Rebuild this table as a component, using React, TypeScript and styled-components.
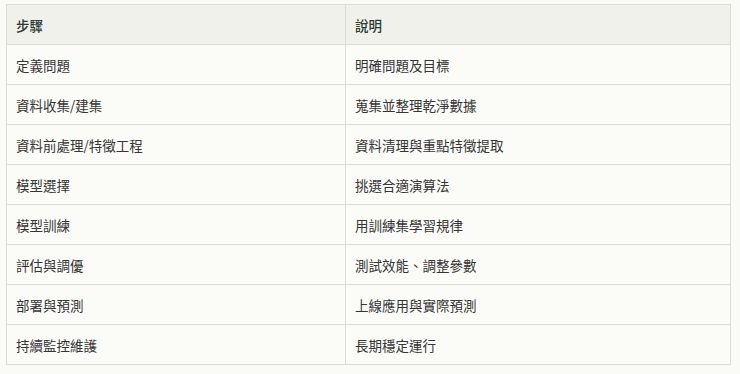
import React from "react";
import styled, { createGlobalStyle } from "styled-components";

const GlobalStyle = createGlobalStyle`
  html, body {
    margin: 0;
    padding: 0;
    background: #fafaf7;
  }
  body {
    font-family: "Noto Sans CJK TC", "Noto Sans", sans-serif;
  }
`;

const Page = styled.div`
  padding: 4px 9px 0 6px;
`;

const Table = styled.table`
  width: 725px;
  border-collapse: collapse;
  border: 1px solid #dcdcd8;
  background: #fbfbf8;
  font-size: 13.5px;
`;

const HeadCell = styled.th<{ $w?: number }>`
  width: ${(p) => (p.$w ? `${p.$w}px` : "auto")};
  height: 40px;
  padding: 0 9px;
  text-align: left;
  font-weight: 500;
  color: #2b3a33;
  background: #f1f1ec;
  border: 1px solid #dcdcd8;
  box-sizing: border-box;
`;

const Cell = styled.td`
  height: 40px;
  padding: 0 9px;
  color: #353535;
  border: 1px solid #dcdcd8;
  box-sizing: border-box;
`;

const rows: [string, string][] = [
  ["定義問題", "明確問題及目標"],
  ["資料收集/建集", "蒐集並整理乾淨數據"],
  ["資料前處理/特徵工程", "資料清理與重點特徵提取"],
  ["模型選擇", "挑選合適演算法"],
  ["模型訓練", "用訓練集學習規律"],
  ["評估與調優", "測試效能、調整參數"],
  ["部署與預測", "上線應用與實際預測"],
  ["持續監控維護", "長期穩定運行"],
];

const App: React.FC = () => {
  return (
    <>
      <GlobalStyle />
      <Page>
        <Table>
          <thead>
            <tr>
              <HeadCell $w={339}>步驟</HeadCell>
              <HeadCell>說明</HeadCell>
            </tr>
          </thead>
          <tbody>
            {rows.map(([step, desc]) => (
              <tr key={step}>
                <Cell>{step}</Cell>
                <Cell>{desc}</Cell>
              </tr>
            ))}
          </tbody>
        </Table>
      </Page>
    </>
  );
};

export default App;
